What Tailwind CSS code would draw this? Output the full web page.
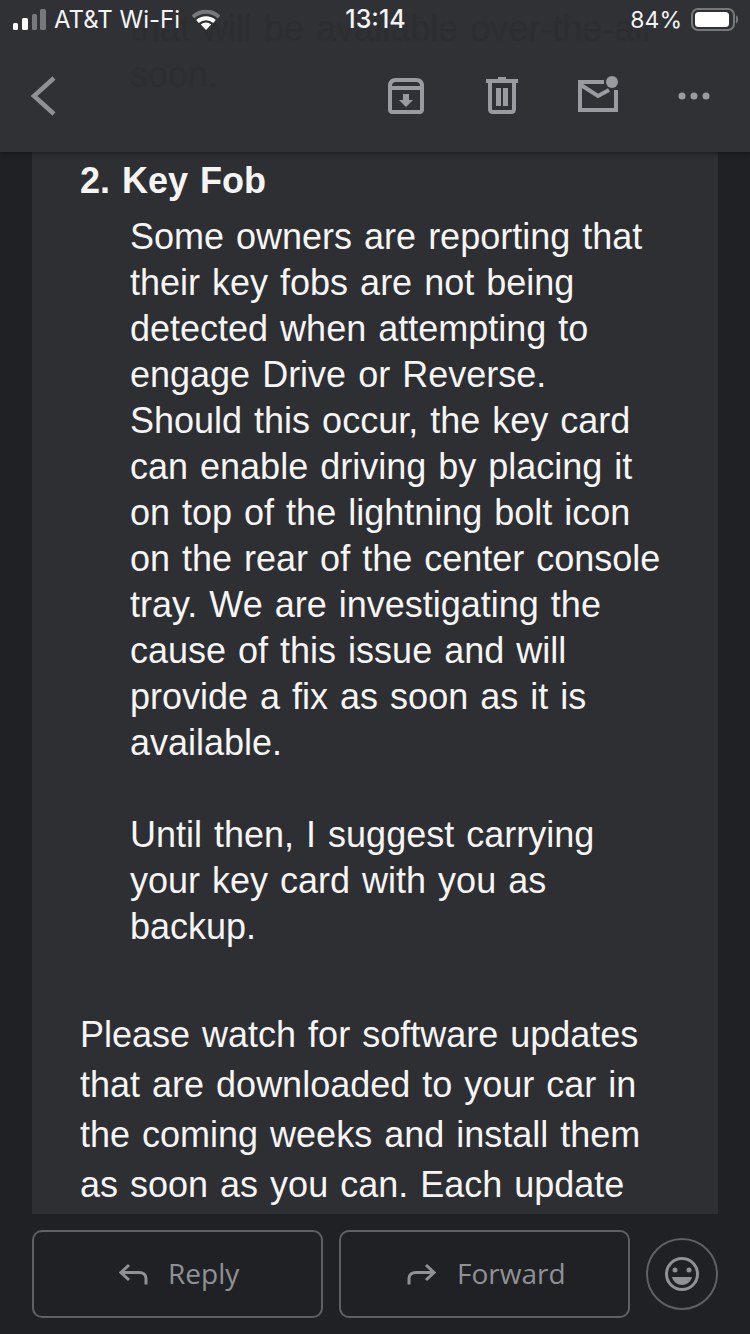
<!DOCTYPE html>
<html lang="en">
<head>
<meta charset="UTF-8">
<meta name="viewport" content="width=device-width, initial-scale=1.0">
<title>Mail</title>
<script src="https://cdn.jsdelivr.net/npm/@tailwindcss/browser@4"></script>
</head>
<body class="bg-[#202124] font-['Liberation_Sans',sans-serif]">
<div class="w-[750px] h-[1334px] overflow-hidden flex flex-col">

  <!-- status bar + toolbar -->
  <header class="relative h-[152px] shrink-0 bg-[#303134] shadow-[0_2px_4px_rgba(0,0,0,0.3)] z-10 overflow-hidden">
    <div class="absolute left-[130px] top-[6px] text-[36px] leading-[46px] [word-spacing:2px] whitespace-nowrap text-[#2d2e31]">that will be available over-the-air<br>soon.</div>
    <div class="relative h-[40px] flex items-center justify-between pl-[13px] pr-[12px] text-[#f4f4f5] font-['Inter',sans-serif] text-[24px]">
      <div class="flex items-center w-[240px]">
        <svg width="34" height="22" viewBox="0 0 34 22" class="shrink-0"><rect x="0" y="14" width="5" height="7" rx="1.5" fill="#fff"/><rect x="9" y="9" width="6" height="12" rx="1.5" fill="#fff"/><rect x="19" y="5" width="5" height="16" rx="1.5" fill="#77787b"/><rect x="27" y="0" width="6" height="21" rx="1.5" fill="#77787b"/></svg>
        <span class="ml-[7px] whitespace-nowrap">AT&amp;T Wi-Fi</span>
        <svg width="28" height="22" viewBox="0 0 28 22" class="ml-[12px] shrink-0"><path d="M1 8a19 19 0 0 1 26 0" fill="none" stroke="#77787b" stroke-width="4"/><path d="M5.5 12.5a13 13 0 0 1 17 0" fill="none" stroke="#fff" stroke-width="4"/><path d="M8.8 15.5l5.2 5.5 5.2-5.500a8 8 0 0 0-10.400 0z" fill="#fff"/></svg>
      </div>
      <span class="font-medium text-[25px]">13:14</span>
      <div class="flex items-center justify-end w-[240px]">
        <span class="text-[23px]">84%</span>
        <svg width="47" height="24" viewBox="0 0 47 24" class="ml-[9px] shrink-0"><rect x="1" y="1" width="42" height="21" rx="6" fill="none" stroke="#77787b" stroke-width="2"/><rect x="4" y="4" width="34" height="15" rx="3.500" fill="#fff"/><path d="M45 8.500c1.500.5 1.500 5.500 0 6" fill="none" stroke="#77787b" stroke-width="2"/></svg>
      </div>
    </div>
    <nav class="relative h-[112px]">
      <svg width="750" height="112" viewBox="0 40 750 112" fill="none" class="block">
        <path d="M54 78 34 96l20 18" stroke="#8f9195" stroke-width="4.500"/>
        <!-- archive -->
        <path d="M390 86c0-4 2-6 6-6h20c4 0 6 2 6 6v24c0 1-1 2-2 2h-28c-1 0-2-1-2-2zM390 88h32" stroke="#9a9ba0" stroke-width="4"/>
        <path d="M403 94h6v6h4l-7 7-7-7h4z" fill="#9a9ba0"/>
        <!-- trash -->
        <path d="M486 81h32M498 79h8" stroke="#9a9ba0" stroke-width="4"/>
        <path d="M490 82v27c0 2 1 3 3 3h18c2 0 3-1 3-3V82" stroke="#9a9ba0" stroke-width="4"/>
        <path d="M496 88h5v18h-5zM503 88h5v18h-5z" fill="#9a9ba0"/>
        <!-- mail with dot -->
        <path d="M604 82h-24v28h36V90M581 85l17 11 11-6" stroke="#9a9ba0" stroke-width="4"/>
        <circle cx="612" cy="82" r="6" fill="#9a9ba0"/>
        <!-- more -->
        <circle cx="682" cy="96" r="3.500" fill="#9a9ba0"/><circle cx="694" cy="96" r="3.500" fill="#9a9ba0"/><circle cx="706" cy="96" r="3.500" fill="#9a9ba0"/>
      </svg>
    </nav>
  </header>

  <!-- message body -->
  <main class="h-[1062px] shrink-0 mx-[32px] bg-[#2e2f32] overflow-hidden pl-[48px] text-[#f5f5f5] text-[36px] [word-spacing:2px] whitespace-nowrap">
    <h2 class="pt-[7px] leading-[44px] font-bold">2. Key Fob</h2>
    <div class="pl-[50px] pt-[11px] leading-[46px]">
      <p>Some owners are reporting that<br>their key fobs are not being<br>detected when attempting to<br>engage Drive or Reverse.<br>Should this occur, the key card<br>can enable driving by placing it<br>on top of the lightning bolt icon<br>on the rear of the center console<br>tray. We are investigating the<br>cause of this issue and will<br>provide a fix as soon as it is<br>available.</p>
      <p class="mt-[46px]">Until then, I suggest carrying<br>your key card with you as<br>backup.</p>
    </div>
    <p class="pt-[60px] leading-[50px]">Please watch for software updates<br>that are downloaded to your car in<br>the coming weeks and install them<br>as soon as you can. Each update</p>
  </main>

  <!-- reply bar -->
  <footer class="flex items-start pl-[32px] pt-[16px] text-[#8f9195] font-['Open_Sans',sans-serif] text-[28px]">
    <button class="w-[291px] h-[88px] border-2 border-[#5f6063] rounded-[10px] flex items-center pl-[85px] gap-[20px]">
      <svg width="29" height="22" viewBox="0 0 29 22" fill="none" stroke="#8f9195" stroke-width="3"><path d="M10 2 2 9.500 10 17M2 9.500h18c4 0 7 2 7 6v6"/></svg>
      <span class="-mt-[3px]">Reply</span>
    </button>
    <button class="ml-[16px] w-[291px] h-[88px] border-2 border-[#5f6063] rounded-[10px] flex items-center pl-[66px] gap-[21px]">
      <svg width="29" height="22" viewBox="0 0 29 22" fill="none" stroke="#8f9195" stroke-width="3"><path d="M19 2l8 7.500L19 17M27 9.500H9c-4 0-7 2-7 6v6"/></svg>
      <span class="-mt-[3px]">Forward</span>
    </button>
    <button class="ml-[16px] mt-[8px] w-[72px] h-[72px] rounded-full border-2 border-[#5f6063] flex items-center justify-center">
      <svg width="36" height="36" viewBox="0 0 36 36" fill="none"><circle cx="18" cy="18" r="15.500" stroke="#8f9195" stroke-width="3"/><circle cx="11" cy="14" r="2.500" fill="#8f9195"/><circle cx="25" cy="14" r="2.500" fill="#8f9195"/><path d="M8 21h20c-1 5-6 8-10 8s-9-3-10-8z" fill="#8f9195"/></svg>
    </button>
  </footer>
</div>
</body>
</html>
